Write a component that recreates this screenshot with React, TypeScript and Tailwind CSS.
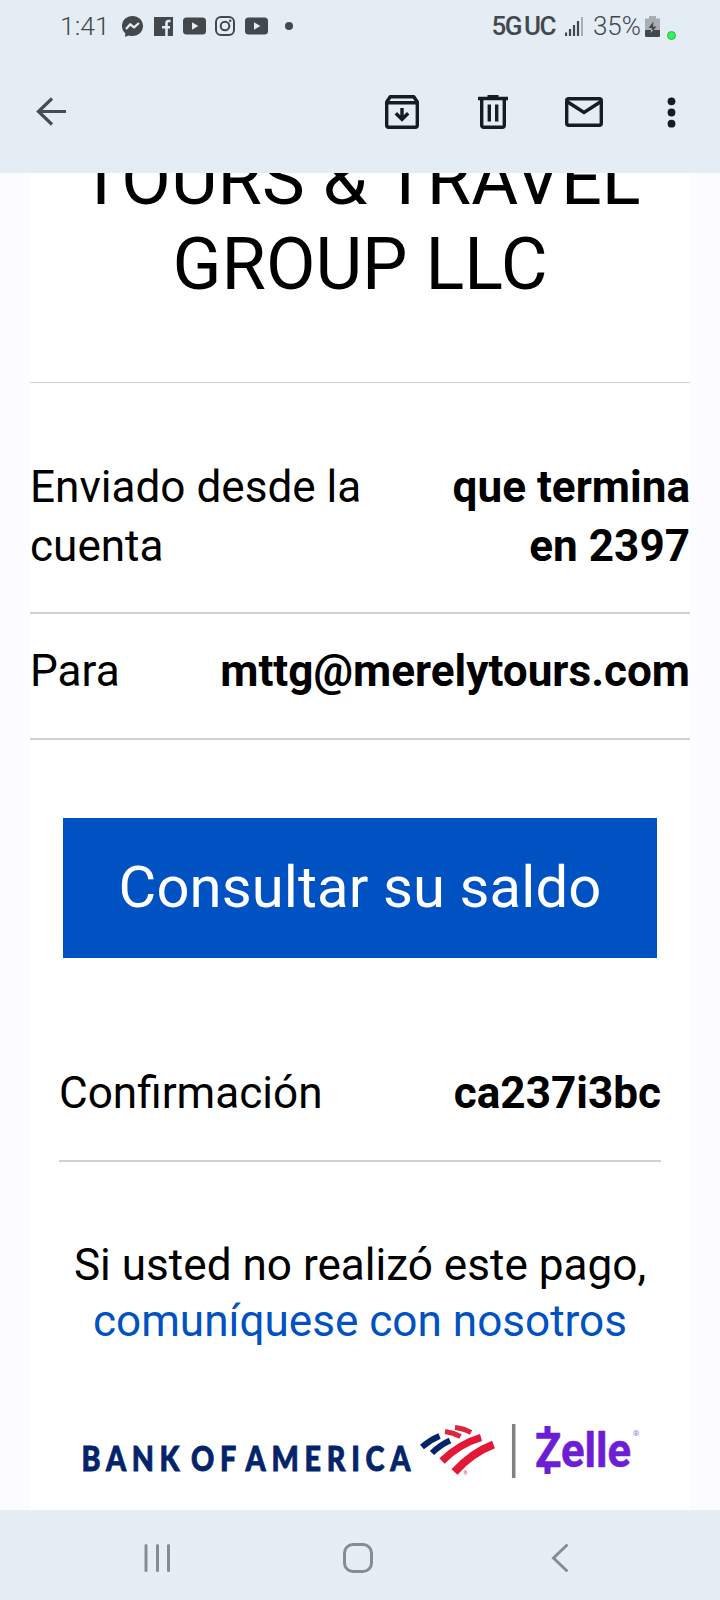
import { ReactNode } from "react";

interface RowProps {
  label: ReactNode;
  value: ReactNode;
  className?: string;
}

function YoutubeIcon() {
  return (
    <svg width="23" height="18" viewBox="0 0 23 18">
      <rect y="0.5" width="23" height="17" rx="3.5" fill="#43484d" />
      <path d="M9 5.2v7.6l6.3-3.8z" fill="#e4ecf4" />
    </svg>
  );
}

function StatusBar() {
  return (
    <div className="flex h-[52px] items-center text-[#43484d]">
      <span className="ml-[60px] w-[62px] text-[26.5px] leading-[52px] font-light whitespace-nowrap">
        1:41
      </span>
      <svg width="21" height="21" viewBox="0 0 21 21">
        <path
          d="M10.5 0C4.6 0 0 4.3 0 10c0 3 1.2 5.500 3.200 7.300V21l3.200-1.600c1.300.4 2.600.6 4.100.6 5.900 0 10.500-4.300 10.500-10S16.400 0 10.500 0z"
          fill="#43484d"
        />
        <path
          d="M4 13l4.300-4.700 3.700 3 5-4.300"
          fill="none"
          stroke="#e4ecf4"
          strokeWidth="2.300"
          strokeLinejoin="round"
        />
      </svg>
      <svg className="ml-[11px]" width="19" height="19" viewBox="0 0 19 19">
        <path d="M0 0h19v19H0z" fill="#43484d" />
        <path
          d="M16.500 4h-2c-1.500 0-2 .8-2 2.200V19M8 10.300h8"
          fill="none"
          stroke="#e4ecf4"
          strokeWidth="2.600"
        />
      </svg>
      <div className="ml-[10px]">
        <YoutubeIcon />
      </div>
      <svg
        className="ml-[9px]"
        width="20"
        height="20"
        viewBox="0 0 20 20"
        fill="none"
        stroke="#43484d"
        strokeWidth="2"
      >
        <rect x="1" y="1" width="18" height="18" rx="5" />
        <circle cx="10" cy="10" r="4.300" />
        <circle cx="15.200" cy="4.800" r="1.200" fill="#43484d" stroke="none" />
      </svg>
      <div className="ml-[10px]">
        <YoutubeIcon />
      </div>
      <span className="ml-[17px] size-2 rounded-full bg-[#43484d]" />

      <div className="ml-auto flex h-full items-center pr-11">
        <div className="flex gap-[3px] text-[26px] font-medium tracking-[-1.5px]">
          <span>5G</span>
          <span>UC</span>
        </div>
        <svg className="ml-[10px]" width="18" height="20" viewBox="0 0 18 20">
          <path
            d="M1 16.500V20M5 13v7M9 9v11M13 5v15"
            stroke="#43484d"
            strokeWidth="2.200"
          />
          <path d="M17 1v19" stroke="#a8aeb4" strokeWidth="2" />
        </svg>
        <span className="ml-[10px] text-[26px] font-light">35%</span>
        <svg className="ml-1" width="15" height="21" viewBox="0 0 15 21">
          <path d="M4 0h7v2.500h4V15H0V2.500h4z" fill="#a9aeb3" />
          <path
            d="M0 14h15v5.500a1.500 1.500 0 0 1-1.500 1.500h-12A1.500 1.500 0 0 1 0 19.500z"
            fill="#43484d"
          />
          <path d="M8.500 5.500L3.500 12H7l-1 5 5.500-6.500H8z" fill="#43484d" />
          <path d="M6.500 14l-1 3 2.500-3z" fill="#e4ecf4" />
        </svg>
        <span className="mt-[18px] ml-[7px] size-[9px] rounded-full border border-[#27b84c] bg-[#35f15c]" />
      </div>
    </div>
  );
}

function Toolbar() {
  return (
    <div className="flex h-[121px] items-start text-[#171c22]">
      <svg
        className="mt-[45px] ml-[35px]"
        width="32"
        height="30"
        viewBox="0 0 32 30"
        fill="none"
        stroke="#454c54"
        strokeWidth="3.200"
      >
        <path d="M31 14.500H3M17 1.500L3.500 14.500l13.500 13" />
      </svg>
      <svg
        className="mt-[43px] ml-auto"
        width="34"
        height="34"
        viewBox="0 0 34 34"
        fill="none"
        stroke="currentColor"
        strokeWidth="3.400"
      >
        <path
          d="M1.700 7l3.500-5.300h23.600L32.300 7v23.300a2 2 0 0 1-2 2H3.700a2 2 0 0 1-2-2z"
          strokeLinejoin="round"
        />
        <path d="M2 7.700h30M17 13v11M10.800 18.300l6.200 6 6.200-6" />
      </svg>
      <svg
        className="mt-[43px] ml-[59px]"
        width="30"
        height="34"
        viewBox="0 0 30 34"
        fill="none"
        stroke="currentColor"
        strokeWidth="3.400"
      >
        <path d="M0 3.500h30M9.500 1.500h11" />
        <path d="M3.700 4v26.300a2 2 0 0 0 2 2h18.600a2 2 0 0 0 2-2V4M11.300 9.500v17M18.700 9.500v17" />
      </svg>
      <svg
        className="mt-[45px] ml-[57px]"
        width="38"
        height="30"
        viewBox="0 0 38 30"
        fill="none"
        stroke="currentColor"
        strokeWidth="3.400"
      >
        <rect x="1.700" y="1.700" width="34.600" height="26.600" rx="2" />
        <path d="M2 4.500l17 11 17-11" />
      </svg>
      <svg
        className="mt-[45px] mr-[44px] ml-[64px]"
        width="9"
        height="31"
        viewBox="0 0 9 31"
        fill="currentColor"
      >
        <circle cx="4.500" cy="4.300" r="3.900" />
        <circle cx="4.500" cy="15.500" r="3.900" />
        <circle cx="4.500" cy="26.700" r="3.900" />
      </svg>
    </div>
  );
}

function Row({ label, value, className }: RowProps) {
  return (
    <div className={`flex justify-between border-[#d0d0d0] text-[44.1px] leading-[59px] ${className}`}>
      <span>{label}</span>
      <strong className="text-right font-bold">{value}</strong>
    </div>
  );
}

function Logos() {
  return (
    <svg className="mx-auto" width="560" height="72" viewBox="80 1410 560 72">
      {/* wordmark, squeezed a little with wide tracking */}
      <g
        fill="#03236a"
        stroke="#03236a"
        strokeWidth="0.9"
        fontFamily="Lato, sans-serif"
        fontWeight="900"
        fontSize="35"
        transform="scale(0.82 1)"
      >
        <text x="99.500" y="1471.500" textLength="119.500" lengthAdjust="spacing">BANK</text>
        <text x="233" y="1471.500" textLength="55" lengthAdjust="spacing">OF</text>
        <text x="299.500" y="1471.500" textLength="201" lengthAdjust="spacing">AMERICA</text>
      </g>
      <g fill="none">
        <path d="M422 1447q8-7 17.500-11M432 1453q8-8 18-12.500" stroke="#03236a" strokeWidth="6" />
        <path d="M445 1431.500q8 1 15.500 5M455 1427.500q9 1 16 5" stroke="#d8283f" strokeWidth="5" />
        <path d="M442 1461q17-17 39-23.500" stroke="#e31837" strokeWidth="7.500" />
        <path d="M454.500 1472q17-19 39-27.500" stroke="#e31837" strokeWidth="8" />
      </g>
      <text x="463.500" y="1475" fontSize="5" fill="#e31837">®</text>
      <path d="M513.700 1424v54" stroke="#808084" strokeWidth="3.500" />
      <text
        x="535"
        y="1466.500"
        fontFamily="Roboto, sans-serif"
        fontWeight="700"
        fontSize="49"
        textLength="96"
        lengthAdjust="spacingAndGlyphs"
        fill="#6d1ed4"
        stroke="#6d1ed4"
        strokeWidth="0.6"
        strokeLinejoin="round"
      >
        Zelle
      </text>
      <path d="M547.500 1426v8M547.500 1464v10" stroke="#6d1ed4" strokeWidth="6" />
      <text x="633" y="1436" fontSize="8" fill="#9a70dc">®</text>
    </svg>
  );
}

function NavBar() {
  return (
    <div className="flex h-[90px] items-center bg-[#e6edf4] pt-[5px]">
      <svg
        className="ml-[143px]"
        width="28"
        height="28"
        viewBox="0 0 28 28"
        stroke="#858d92"
        strokeWidth="3"
        strokeLinecap="round"
      >
        <path d="M3 1.500v25M14.500 1.500v25M25.500 1.500v25" />
      </svg>
      <span className="ml-[172px] size-[30px] rounded-[10px] border-3 border-[#858d92]" />
      <svg
        className="ml-[178px]"
        width="19"
        height="28"
        viewBox="0 0 19 28"
        fill="none"
        stroke="#858d92"
        strokeWidth="3"
        strokeLinecap="round"
      >
        <path d="M15.500 1.500L2.500 14l13 12.500" />
      </svg>
    </div>
  );
}

export default function App() {
  return (
    <div className="flex h-[1600px] w-[720px] flex-col overflow-hidden bg-[#fcfcfe] font-[Roboto,sans-serif] text-black">
      <header className="shrink-0 bg-[#e4ecf4]">
        <StatusBar />
        <Toolbar />
      </header>

      <main className="mx-[30px] h-[1337px] shrink-0 overflow-hidden bg-white">
        <h1 className="-mt-[36px] text-center text-[72px] leading-[85px]">
          TOURS &amp; TRAVEL
          <br />
          GROUP LLC
        </h1>

        <Row
          className="mt-[75px] h-[232px] border-t border-b-2 pt-[75px]"
          label={
            <>
              Enviado desde la
              <br />
              cuenta
            </>
          }
          value={
            <>
              que termina
              <br />
              en 2397
            </>
          }
        />
        <Row className="h-[126px] border-b-2 pt-[28px]" label="Para" value="mttg@merelytours.com" />

        <button className="mx-auto mt-[78px] block h-[140px] w-[594px] bg-[#0052c2] pb-0.5 text-[58px] tracking-[0.100px] text-white">
          Consultar su saldo
        </button>

        <Row
          className="mx-[29px] mt-[106px] h-[98px] border-b-2"
          label="Confirmación"
          value="ca237i3bc"
        />

        <p className="mt-[75px] mb-[61px] text-center text-[44.1px] leading-[56px]">
          Si usted no realizó este pago,
          <br />
          <a className="text-[#0052c2]">comuníquese con nosotros</a>
        </p>
        <Logos />
      </main>

      <NavBar />
    </div>
  );
}
